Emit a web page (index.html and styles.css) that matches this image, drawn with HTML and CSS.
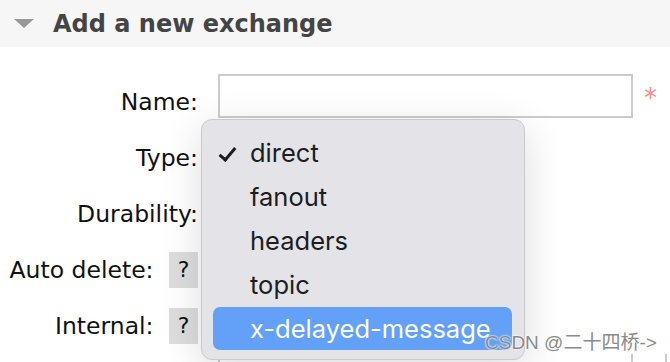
FILE: index.html
```html
<!DOCTYPE html>
<html lang="en">
<head>
  <meta charset="UTF-8" />
  <title>Add a new exchange</title>
  <link rel="stylesheet" href="styles.css">
</head>
<body>
  <div class="section-head">
    <span class="toggle"></span>
    <h2>Add a new exchange</h2>
  </div>

  <div class="form">
    <div class="row">
      <label class="label">Name:</label>
      <input class="field" type="text" />
      <span class="req">*</span>
    </div>
    <div class="row">
      <label class="label">Type:</label>
      <div class="field ghost"></div>
    </div>
    <div class="row">
      <label class="label">Durability:</label>
      <div class="field ghost"></div>
    </div>
    <div class="row">
      <label class="label">Auto delete: <span class="help">?</span></label>
      <div class="field ghost"></div>
    </div>
    <div class="row">
      <label class="label">Internal: <span class="help">?</span></label>
      <div class="field ghost"></div>
    </div>
    <div class="row args">
      <label class="label"></label>
      <input class="field" type="text" />
      <input class="field small" type="text" />
    </div>

    <!-- open native select popup -->
    <ul class="menu">
      <li class="checked">direct</li>
      <li>fanout</li>
      <li>headers</li>
      <li>topic</li>
      <li class="active">x-delayed-message</li>
    </ul>
  </div>

  <div class="watermark">CSDN @二十四桥-&gt;</div>
</body>
</html>
```

FILE: styles.css
```css
body {
  margin: 0;
  font-family: "DejaVu Sans", Verdana, sans-serif;
  color: #111;
  background: #fff;
  width: 670px;
  height: 362px;
  overflow: hidden;
  position: relative;
}
.section-head {
  display: flex;
  align-items: center;
  height: 47px;
  background: #f6f6f6;
  padding-left: 14px;
}
.toggle {
  width: 0;
  height: 0;
  border-left: 10px solid transparent;
  border-right: 10px solid transparent;
  border-top: 9px solid #999;
  margin-right: 19px;
}
.section-head h2 {
  margin: 0;
  font-size: 24px;
  font-weight: bold;
  color: #444;
}
.form {
  position: relative;
  padding-top: 27px;
}
.row {
  display: flex;
  align-items: flex-start;
  height: 56px;
}
.label {
  flex-shrink: 0;
  width: 198px;
  box-sizing: border-box;
  text-align: right;
  font-size: 23.5px;
  line-height: 28px;
  padding-top: 14px;
  display: flex;
  justify-content: flex-end;
  align-items: center;
  white-space: pre;
}
.help {
  display: inline-block;
  width: 29px;
  height: 36px;
  line-height: 36px;
  font-size: 22px;
  text-align: center;
  background: #ddd;
  margin-left: 8px;
}
.row:nth-child(4) .label,
.row:nth-child(5) .label {
  padding-top: 10px;
}
.field {
  flex-shrink: 0;
  margin-left: 20px;
  width: 415px;
  height: 44px;
  box-sizing: border-box;
  border: 2px solid #ccc;
  background: #fff;
}
.field.ghost {
  border: none;
}
.field.small {
  width: 5px;
  margin-left: 32px;
  border-right: none;
}
.args {
  height: 8px;
  overflow: hidden;
}
.args .field {
  margin-top: -2px;
}
.req {
  color: #f28b8b;
  font-size: 26px;
  margin-left: 11px;
  margin-top: 9px;
}
.menu {
  position: absolute;
  left: 201px;
  top: 72px;
  width: 324px;
  height: 241px;
  box-sizing: border-box;
  margin: 0;
  padding: 11px 12px 0 11px;
  list-style: none;
  background: #e4e3e8;
  border: 1px solid #c9c8cc;
  border-radius: 11px;
  box-shadow: 0 10px 40px rgba(0, 0, 0, 0.14);
  font-family: Inter, "Open Sans", sans-serif;
  font-size: 25.5px;
  color: #1d1d1f;
}
.menu li {
  position: relative;
  height: 44px;
  line-height: 44px;
  padding-left: 37px;
  border-radius: 7px;
}
.menu li.checked::before {
  content: "";
  position: absolute;
  left: 10px;
  top: 13px;
  width: 6px;
  height: 14px;
  border-right: 3px solid #1d1d1f;
  border-bottom: 3px solid #1d1d1f;
  transform: rotate(40deg);
}
.menu li.active {
  background: #63a1f8;
  color: #fff;
  height: 43px;
}
.watermark {
  position: absolute;
  left: 485px;
  top: 327px;
  font-family: "Liberation Sans", "Noto Sans CJK SC", sans-serif;
  font-size: 19px;
  color: #8a8a8a;
  text-shadow: 0 0 2px #fff, 0 0 2px #fff;
}
```
